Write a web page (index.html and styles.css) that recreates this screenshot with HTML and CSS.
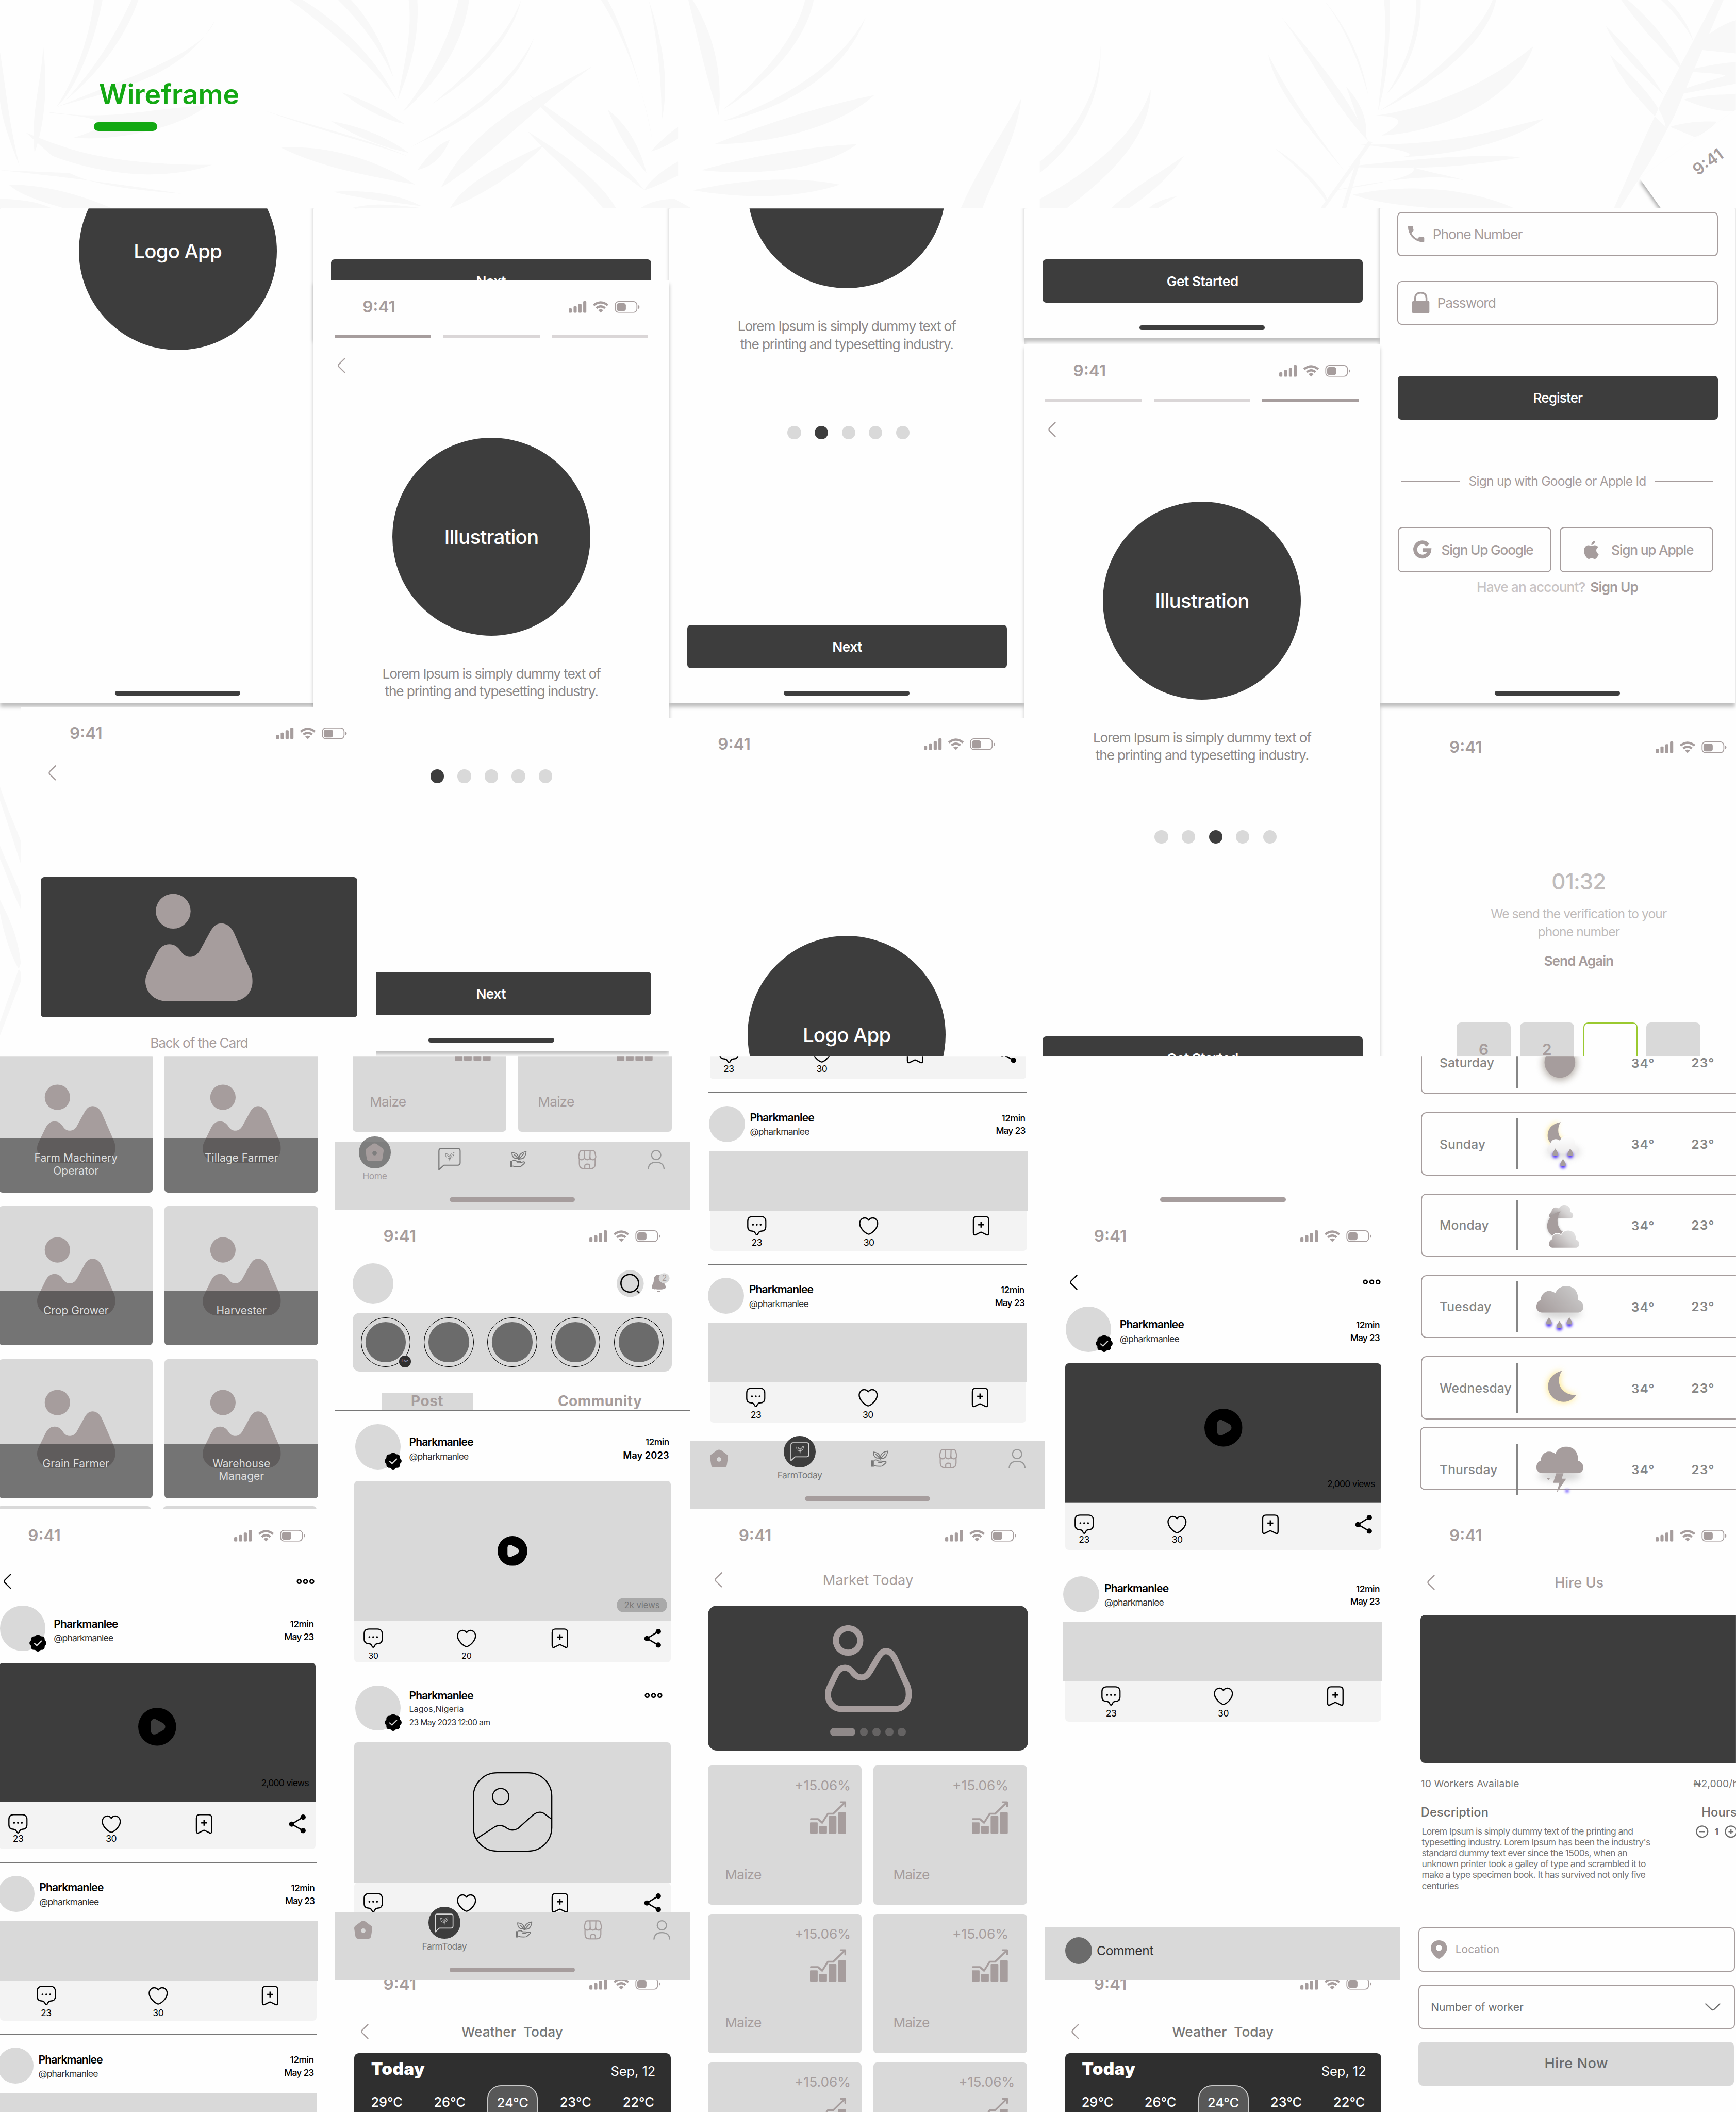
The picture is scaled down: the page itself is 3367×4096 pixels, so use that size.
FILE: index.html
```html
<!DOCTYPE html>
<html lang="en">
<head>
<meta charset="utf-8">
<title>Wireframe</title>
<link rel="stylesheet" href="styles.css">
</head>
<body>
<svg class="defs" aria-hidden="true">
  <defs>
    <filter id="soft" x="-100%" y="-100%" width="300%" height="300%"><feGaussianBlur stdDeviation="3"/></filter>
    <filter id="glow" x="-100%" y="-100%" width="300%" height="300%"><feGaussianBlur stdDeviation="8"/></filter>
    <linearGradient id="cloudA" x1="0" y1=".8" x2="1" y2=".2"><stop offset="0" stop-color="#a69d9d"/><stop offset="1" stop-color="#cccccc"/></linearGradient>
    <linearGradient id="cloudB" x1="0" y1=".8" x2="1" y2=".2"><stop offset="0" stop-color="#a69d9d"/><stop offset=".6" stop-color="#d5d3d3"/><stop offset="1" stop-color="#e6e6e6"/></linearGradient>
    <linearGradient id="cloudC" x1="0" y1="0" x2="0" y2="1"><stop offset="0" stop-color="#ffffff"/><stop offset="1" stop-color="#ecebeb"/></linearGradient>
  </defs>
  <symbol id="sys" viewBox="0 0 157 26">
    <g fill="currentColor"><rect x="0" y="16" width="7" height="10" rx="2"/><rect x="10.7" y="11" width="7" height="15" rx="2"/><rect x="21.4" y="6" width="7" height="20" rx="2"/><rect x="32" y="0" width="7" height="26" rx="2"/>
    <path d="M65 20Q70.700 16 76.400 20L70.700 25.800Z"/><rect x="106" y="4.500" width="20.500" height="17.500" rx="5"/><path d="M154 9Q157 10 157 13T154 17Z"/></g>
    <g fill="none" stroke="currentColor"><path stroke-width="5" d="M55 9.200Q70.700 -3.600 86.400 9.200M61 15.600Q70.700 7.600 80.400 15.600"/><rect x="103" y="1" width="48" height="24" rx="7.500" stroke-width="2"/></g>
  </symbol>
  <symbol id="back" viewBox="0 0 17 34"><path fill="none" stroke="currentColor" stroke-width="2.6" stroke-linecap="round" d="M15.500 1.500 2.800 14Q.500 17 2.800 20L15.500 32.500"/></symbol>
  <symbol id="picture" viewBox="0 0 237 238"><g fill="currentColor"><circle cx="61.500" cy="39" r="38.500"/><path d="M6 172 25 133C33 117 42 112 53 112C64 112 72 118 78 127C84 136 90 140 98.600 140C108 140 114 136 120 127L142 87C150 72 158 66 168 66C179 66 189 73 196 87L234 174C236 181 237 187 237 194C237 218 219 238 194 238H46C20 238 0 218 0 194C0 186 2 180 6 172Z"/></g></symbol>
  <symbol id="picture-line" viewBox="0 0 192 192"><g fill="none" stroke="currentColor" stroke-width="13.5"><circle cx="51.200" cy="33.600" r="27"/><path d="M10.500 137 26 105C31 97 37 94 44.300 94C52 94 58 99 63.700 107C69 113 74 115.500 81 115.500C88 115.500 94 111 99 103L118 70.600C123 62 128 57.300 134.800 57.300C143 57.300 149 63 154 72L183.500 137C185 142 185.500 147 185.500 152.800C185.500 171 173 185.200 155 185.200H36.300C19 185.200 6.500 171 6.500 152.800C6.500 147 8 142 10.500 137Z"/></g></symbol>
  <symbol id="comment" viewBox="0 0 43 44"><path fill="none" stroke="currentColor" stroke-width="2.700" d="M12 1.500H31C38 1.500 41.500 6 41.500 12V24C41.500 31 38 34 31 34C28 34 27 35 26 36.500L23.500 40.500C22.300 42.500 20.700 42.500 19.500 40.500L17 36.500C16 35 15 34 12 34C5 34 1.500 31 1.500 24V12C1.500 5 5 1.500 12 1.500Z"/><g fill="currentColor"><circle cx="13" cy="19.500" r="2.100"/><circle cx="21.500" cy="19.500" r="2.100"/><circle cx="30" cy="19.500" r="2.100"/></g></symbol>
  <symbol id="heart" viewBox="0 0 43 44"><path fill="none" stroke="currentColor" stroke-width="2.700" stroke-linejoin="round" d="M21.500 9.500C25 4 32 3 37 7C42.500 12 43 20 37.500 28C34 33 28 38 24 40Q21.500 41.300 19 40C15 38 9 33 5.500 28C0 20 .500 12 6 7C11 3 18 4 21.500 9.500Z"/></symbol>
  <symbol id="mark" viewBox="0 0 37 44"><path fill="none" stroke="currentColor" stroke-width="2.700" stroke-linejoin="round" d="M9 1.500H28C33 1.500 35.500 4 35.500 9V38C35.500 42 33.500 43.500 30 41.500L21 37Q18.500 35.500 16 37L7 41.500C3.500 43.500 1.500 42 1.500 38V9C1.500 4 4 1.500 9 1.500Z"/><path stroke="currentColor" stroke-width="3" d="M12 19.500H25M18.500 13V26"/></symbol>
  <symbol id="share" viewBox="0 0 37 44"><path fill="none" stroke="currentColor" stroke-width="3" d="M31 7 6 22.500 31 37"/><g fill="currentColor"><circle cx="5.800" cy="22.500" r="5.800"/><circle cx="31" cy="7" r="5.800"/><circle cx="31" cy="37" r="5.800"/></g></symbol>
  <symbol id="badge" viewBox="0 0 40 40"><rect x="5" y="5" width="30" height="30" rx="6"/><rect x="5" y="5" width="30" height="30" rx="6" transform="rotate(45 20 20)"/><path fill="none" stroke="#d9d9d9" stroke-width="2.600" stroke-linecap="round" stroke-linejoin="round" d="M12.500 21 17.500 25.500 27.500 15.500"/></symbol>
  <symbol id="more" viewBox="0 0 40 12"><g fill="none" stroke="currentColor" stroke-width="3"><circle cx="6" cy="6" r="4"/><circle cx="20" cy="6" r="4"/><circle cx="34" cy="6" r="4"/></g></symbol>
  <symbol id="play" viewBox="0 0 84 84"><path fill-rule="evenodd" d="M42 0A42 42 0 1 1 42 84A42 42 0 1 1 42 0ZM28 34C28 26 34 22.500 41 26.500L55 34C61.500 38 61.500 46 55 50L41 57.500C34 61.500 28 58 28 50Z"/></symbol>
  <symbol id="home" viewBox="0 0 40 40"><path fill="currentColor" fill-rule="evenodd" d="M15.500 1.800C18 0 22 0 24.500 1.800L37.500 11.500C39.500 13 40.300 15.500 39.800 18.500L37.300 34.500C36.800 38 34.500 40 31 40H9C5.500 40 3.200 38 2.700 34.500L.200 18.500C-.300 15.500 .500 13 2.500 11.500ZM20 17A5 5 0 1 0 20 27A5 5 0 1 0 20 17Z"/></symbol>
  <symbol id="leaves" viewBox="0 0 34 36"><g fill="none" stroke="currentColor" stroke-width="1.800" stroke-linejoin="round"><path d="M1 4C8 5 15 8 16.500 15C17 17 16.800 19 16 21C12 22 7 21 4 17C1.500 13 2 8 1 4ZM33 1C31 12 28 20 18 21C17 17 17.500 12 20 8.500C23 4 28 2.500 33 1ZM7 9C12 14 16 20 17 33M27 7C22 13 18 21 17 29"/></g></symbol>
  <symbol id="chat" viewBox="0 0 50 50"><path fill="none" stroke="currentColor" stroke-width="2.500" stroke-linejoin="round" d="M1.500 48.500V7Q1.500 1.500 7 1.500H43Q48.500 1.500 48.500 7V33Q48.500 38.500 43 38.500H12.500Z"/><use href="#leaves" x="15" y="10" width="21" height="22"/></symbol>
  <symbol id="farm" viewBox="0 0 37 37"><g fill="none" stroke="currentColor" stroke-width="2" stroke-linejoin="round"><path d="M4.500 3.500C13 4.500 18.500 7 19 16.500C11 18.500 4.500 15 4.500 3.500ZM36 1.500C34.500 13 30 19 20.500 17.500C19 9 25 3 36 1.500ZM9 8C13 11 17 15 19.500 20M31 6C27 10 23 14 19.500 20M6 22C10 20 13 21 16 23.500H22C25 23.500 24.500 26 22 26.500H15M24 25.500 31 24Q34.500 25 31 28.500L24 34.500Q14 36 6 33.500"/></g><rect x="0" y="22" width="5.500" height="14" fill="currentColor"/></symbol>
  <symbol id="store" viewBox="0 0 41 43"><g fill="none" stroke="currentColor" stroke-width="2.500" stroke-linejoin="round"><path d="M9 1.500H32Q36.500 1.500 37.500 6L39.500 15Q39 22 33 22T26.500 15.500Q26.500 22 20.500 22T14.500 15.500Q14 22 8 22T1.500 15L3.500 6Q4.500 1.500 9 1.500ZM14 2 14.500 16M27 2 26.500 16M3 20V31Q3 41.500 13 41.500H28Q38 41.500 38 31V20M15 41.500V36Q15 31.500 20.500 31.500T26 36V41.500"/></g></symbol>
  <symbol id="person" viewBox="0 0 38 43"><g fill="none" stroke="#999" stroke-width="2.600"><circle cx="19" cy="11.500" r="10.200"/><path d="M1.500 43C2 31.500 9 27.500 19 27.500S36 31.500 36.500 43"/></g></symbol>
  <symbol id="chart" viewBox="0 0 80 72"><g fill="currentColor"><rect x="0" y="47" width="17" height="25" rx="1.500"/><rect x="20.500" y="55" width="17" height="17" rx="1.500"/><rect x="41.500" y="33" width="17" height="39" rx="1.500"/><rect x="62.500" y="25" width="17" height="47" rx="1.500"/></g><path fill="none" stroke="currentColor" stroke-width="4" stroke-linejoin="round" stroke-linecap="round" d="M2 40H18L27 48 39.500 28H51.500L77 3M68 2.500H78V12"/></symbol>
  <symbol id="cloud" viewBox="0 0 104 59"><path d="M14 59C5 59 0 53 0 46C0 39 4 33 9.500 31C10 20 18 11 28 11C34 11 38 13 42 16C46 6 55 0 66 0C82 0 92 12 92 26V31C99 33 104 39 104 46C104 53 99 59 91 59Z"/></symbol>
  <symbol id="drop" viewBox="-10 -10 32 40"><circle cx="6" cy="15" r="6.500" fill="#4a2bff" filter="url(#soft)"/><path fill="#a69d9d" d="M6 0C9 6 12 8 12 12Q12 16 11 16H1Q0 16 0 12C0 8 3 6 6 0Z"/></symbol>
  <symbol id="call" viewBox="3 3 18 18"><path fill="currentColor" d="M6.620 10.790c1.440 2.830 3.760 5.140 6.590 6.590l2.200-2.200c.270-.270.670-.360 1.020-.240 1.120.370 2.330.570 3.570.570.550 0 1 .450 1 1V20c0 .550-.450 1-1 1-9.390 0-17-7.610-17-17 0-.550.450-1 1-1h3.500c.550 0 1 .450 1 1 0 1.250.200 2.450.570 3.570.110.350.030.740-.250 1.020l-2.200 2.200z"/></symbol>
</svg>

<main class="sheet">
  <header class="cover">
    <svg class="leafs" viewBox="0 0 3840 461" aria-hidden="true">
      <g transform="scale(.9566 .6378)" fill="#f8f8f8">
        <path d="M218 0C208 110 180 260 130 372C165 330 215 180 237 0ZM304 0C270 110 225 230 150 350C200 290 280 170 320 0ZM497 70C470 180 330 250 130 372C240 320 420 280 497 70ZM115 388C250 420 330 380 480 365C420 440 280 490 170 478C250 440 270 410 115 392ZM60 460C160 520 240 570 490 572C400 620 260 620 120 540ZM0 590C60 600 200 620 420 672C330 660 230 650 160 600ZM20 640C120 640 210 690 260 723H150C100 700 50 680 20 640ZM0 180C15 320 20 420 45 575C25 500 5 420 0 350ZM100 160C110 300 105 420 80 530C70 400 95 290 100 160ZM0 690C40 690 90 700 120 723H0Z"/>
        <path d="M670 0C780 120 880 260 918 350C880 220 790 80 700 0ZM782 0C850 100 890 200 910 270C890 160 850 60 812 0ZM945 0C955 120 930 250 920 345C950 240 970 120 965 0ZM1060 0C1040 130 990 280 930 390C1010 290 1070 160 1085 0ZM1205 0C1190 100 1130 240 1000 360C1080 260 1170 140 1205 0ZM1235 130C1190 280 1080 400 950 510C1060 430 1190 330 1235 130ZM1370 230C1250 330 1100 420 1020 650C1120 560 1200 420 1370 230ZM1260 500C1180 560 1080 620 1040 723C1140 660 1210 580 1260 500ZM615 385C730 450 850 490 948 545C850 480 730 440 615 385ZM650 512C760 500 880 560 960 640C850 610 740 580 650 512ZM790 320C850 350 900 390 935 430C900 420 840 380 790 320ZM765 420C840 440 900 480 945 530C880 510 820 470 765 420ZM770 665C860 655 930 680 975 715C900 700 840 690 770 665ZM810 723C860 700 920 710 980 723ZM1040 485C1020 560 990 580 965 590C990 540 1010 500 1040 485Z"/>
        <path d="M1390 0C1440 120 1490 300 1510 500C1495 360 1450 120 1405 0ZM1500 0C1530 130 1550 280 1530 420C1530 280 1520 130 1500 0ZM1225 330C1340 450 1430 540 1490 660C1400 560 1300 460 1225 330ZM1220 455C1310 540 1390 630 1425 723H1395C1340 620 1270 540 1220 455ZM1405 380C1450 430 1480 510 1495 600C1460 540 1430 470 1405 380ZM1568 440C1540 470 1520 500 1505 525C1520 520 1550 500 1568 480ZM1568 560C1530 590 1500 630 1490 660C1530 640 1550 620 1568 610ZM1560 690C1530 690 1500 700 1480 723H1600Z"/>
      </g>
      <g transform="translate(1360 0) scale(.9566 .6378)" fill="#f8f8f8">
        <path d="M180 0C230 120 250 260 240 400C210 260 190 120 170 0ZM440 0C420 130 340 270 250 380C350 290 440 150 460 0ZM580 60C530 200 420 330 250 420C370 390 530 270 580 60ZM600 330C500 360 360 420 230 500C360 500 520 440 600 330ZM560 500C440 510 320 540 200 590C330 610 480 590 560 500ZM520 640C420 610 300 620 180 660C300 690 420 690 520 640ZM850 723C880 600 930 480 940 340C900 460 840 580 800 723Z"/>
      </g>
      <g transform="translate(2300 0) scale(.982 .6378)" fill="#f8f8f8">
        <path d="M134 120C150 280 80 470 0 560V600C100 480 150 300 134 120ZM250 310C220 460 120 590 0 690V723H60C150 620 250 480 250 310ZM325 540C270 600 210 650 160 723H200C260 660 300 600 325 540ZM310 680C280 690 260 700 245 723H265Z"/>
        <path d="M545 60C610 200 670 380 740 490C700 340 620 200 545 60ZM640 0C690 100 720 220 740 330C725 200 690 90 640 0ZM775 0C785 120 770 250 762 385C785 270 790 120 788 0ZM848 0C850 120 820 240 780 330C830 250 860 120 858 0ZM1020 0C990 120 880 270 765 385C900 280 1010 140 1028 0ZM1112 160C1050 240 920 370 750 402C860 400 780 460 770 470C900 460 1070 350 1112 160ZM1135 412C1050 440 930 510 716 500C850 520 870 550 770 545C900 550 1060 500 1135 412ZM1085 545C960 530 800 560 690 578C840 590 960 580 1085 545ZM840 580C880 600 930 610 962 628C900 600 790 620 656 662C760 640 860 610 840 580ZM515 190C560 330 640 500 690 600C620 470 530 320 515 190ZM530 515C580 580 620 640 645 700C660 690 600 580 530 515ZM690 300C710 380 720 440 735 480C740 410 720 350 690 300ZM705 675C840 630 980 660 1070 723H900C820 715 750 700 705 675ZM740 490 632 723H642L750 492ZM716 545 680 723H690L722 560Z"/>
        <path d="M1310 0C1360 110 1420 200 1450 250C1430 160 1370 60 1325 0ZM1400 0C1440 60 1470 120 1475 160C1465 90 1440 40 1415 0ZM1275 90C1340 190 1380 260 1405 330C1360 260 1300 180 1275 90ZM1285 190C1340 270 1400 360 1410 440C1370 380 1310 290 1285 190ZM1568 70C1540 80 1500 120 1470 170L1568 185ZM1568 215C1520 220 1470 240 1440 248C1500 250 1560 260 1540 265C1490 290 1440 310 1410 335C1470 320 1530 300 1568 290ZM1450 345C1500 325 1540 330 1568 325V385C1530 390 1490 370 1450 345ZM1420 440C1460 420 1500 420 1525 422C1510 450 1490 470 1475 475ZM1520 0 1405 340 1365 470 1293 723H1307L1375 560 1430 400 1540 0Z"/>
      </g>
    </svg>
    <h1 class="title">Wireframe</h1>
    <div class="rule"></div>
    <article class="phone tilted"><div class="status"><b>9:41</b></div></article>
  </header>

  <section class="board upper">
    <svg class="side-leaf" viewBox="0 0 46 720" aria-hidden="true"><path fill="#f8f8f8" d="M0 170C20 230 36 260 46 290V340C30 290 10 230 0 200ZM0 300C20 350 36 380 46 410V440C26 400 10 350 0 330ZM0 420C20 460 40 500 46 560V580C20 540 6 480 0 450ZM46 560 0 690V720L46 600Z"/></svg>

    <article class="phone splash p-splash1"><div class="disc">Logo App</div><i class="bar"></i></article>

    <article class="phone p-next"><div class="btn">Next</div><i class="bar"></i></article>

    <article class="phone p-step2">
      <div class="disc illus">Illustration</div>
      <p class="lead">Lorem Ipsum is simply dummy text of<br>the printing and typesetting industry.</p>
      <div class="dots"><i></i><i class="on"></i><i></i><i></i><i></i></div>
      <div class="btn">Next</div><i class="bar"></i>
    </article>

    <article class="phone p-start"><div class="btn">Get Started</div><i class="bar"></i></article>

    <article class="phone p-register">
      <div class="input"><svg class="i36"><use href="#call"/></svg>Phone Number</div>
      <div class="input pass"><svg class="lock" viewBox="0 0 38 48"><path fill="none" stroke="currentColor" stroke-width="4" d="M6.500 22V14C6.500 6 12 2 19 2S31.500 6 31.500 14V22"/><rect y="20" width="38" height="28" rx="3.500" fill="currentColor"/></svg>Password</div>
      <div class="btn register">Register</div>
      <div class="or"><span>Sign up with Google or Apple Id</span></div>
      <div class="socials">
        <div class="social google"><svg viewBox="0 0 40 40"><path fill="none" stroke="currentColor" stroke-width="8.500" d="M32.500 9.500A15.700 15.700 0 1 0 35.700 20.500H20.500"/></svg>Sign Up Google</div>
        <div class="social apple"><svg viewBox="2.200 0 19.600 24"><path fill="currentColor" d="M12.152 6.896c-.948 0-2.415-1.078-3.960-1.040-2.040.027-3.910 1.183-4.961 3.014-2.117 3.675-.546 9.103 1.519 12.090 1.013 1.454 2.208 3.090 3.792 3.039 1.520-.065 2.090-.987 3.935-.987 1.831 0 2.350.987 3.960.948 1.637-.026 2.676-1.480 3.676-2.948 1.156-1.688 1.636-3.325 1.662-3.415-.039-.013-3.182-1.221-3.220-4.857-.026-3.040 2.480-4.494 2.597-4.559-1.429-2.090-3.623-2.324-4.390-2.376-2-.156-3.675 1.090-4.610 1.090zM15.530 3.830c.843-1.012 1.400-2.427 1.245-3.830-1.207.052-2.662.805-3.532 1.818-.780.896-1.454 2.338-1.273 3.714 1.338.104 2.715-.688 3.559-1.701"/></svg>Sign up Apple</div>
      </div>
      <p class="have">Have an account? <b>Sign Up</b></p>
      <i class="bar"></i>
    </article>

    <article class="phone p-step1">
      <div class="status"><b>9:41</b><svg class="sys"><use href="#sys"/></svg></div>
      <div class="progress"><i class="on"></i><i></i><i></i></div>
      <svg class="back"><use href="#back"/></svg>
      <div class="disc illus">Illustration</div>
      <p class="lead">Lorem Ipsum is simply dummy text of<br>the printing and typesetting industry.</p>
      <div class="dots"><i class="on"></i><i></i><i></i><i></i><i></i></div>
      <div class="btn">Next</div><i class="bar"></i>
    </article>

    <article class="phone p-step3">
      <div class="status"><b>9:41</b><svg class="sys"><use href="#sys"/></svg></div>
      <div class="progress"><i></i><i></i><i class="on"></i></div>
      <svg class="back"><use href="#back"/></svg>
      <div class="disc illus">Illustration</div>
      <p class="lead">Lorem Ipsum is simply dummy text of<br>the printing and typesetting industry.</p>
      <div class="dots"><i></i><i></i><i class="on"></i><i></i><i></i></div>
      <div class="btn">Get Started</div><i class="bar"></i>
    </article>

    <article class="phone flat splash p-splash2">
      <div class="status"><b>9:41</b><svg class="sys"><use href="#sys"/></svg></div>
      <div class="disc">Logo App</div>
    </article>

    <article class="phone flat p-card">
      <div class="status"><b>9:41</b><svg class="sys"><use href="#sys"/></svg></div>
      <svg class="back"><use href="#back"/></svg>
      <div class="idcard"><svg><use href="#picture"/></svg></div>
      <p class="caption">Back of the Card</p>
    </article>

    <article class="phone flat p-otp">
      <div class="status"><b>9:41</b><svg class="sys"><use href="#sys"/></svg></div>
      <p class="timer">01:32</p>
      <p class="sent">We send the verification to your<br>phone number</p>
      <p class="again">Send Again</p>
      <div class="code"><span>6</span><span>2</span><span class="cur"></span><span></span></div>
    </article>
  </section>

  <section class="board lower">
    <article class="phone flat p-roles">
      <div class="roles">
        <div class="role"><svg><use href="#picture"/></svg><p>Farm Machinery<br>Operator</p></div>
        <div class="role"><svg><use href="#picture"/></svg><p>Tillage Farmer</p></div>
        <div class="role"><svg><use href="#picture"/></svg><p>Crop Grower</p></div>
        <div class="role"><svg><use href="#picture"/></svg><p>Harvester</p></div>
        <div class="role"><svg><use href="#picture"/></svg><p>Grain Farmer</p></div>
        <div class="role"><svg><use href="#picture"/></svg><p>Warehouse<br>Manager</p></div>
      </div>
      <div class="roles more"><div class="role"></div><div class="role"></div></div>
    </article>

    <article class="phone flat p-homes">
      <div class="stocks">
        <div class="stock"><span>+15.06%</span><svg><use href="#chart"/></svg><p>Maize</p></div>
        <div class="stock"><span>+15.06%</span><svg><use href="#chart"/></svg><p>Maize</p></div>
      </div>
      <nav class="tabs first">
        <div class="active"><span class="knob"><svg class="t-home"><use href="#home"/></svg></span>Home</div>
        <svg class="t-chat"><use href="#chat"/></svg><svg class="t-farm"><use href="#farm"/></svg><svg class="t-store"><use href="#store"/></svg><svg class="t-person"><use href="#person"/></svg>
        <i class="bar"></i>
      </nav>
    </article>

    <article class="phone flat p-thread-mid">
      <div class="status"><b>9:41</b><svg class="sys"><use href="#sys"/></svg></div>
      <div class="tools"><svg class="back"><use href="#back"/></svg><svg class="dots3"><use href="#more"/></svg></div>
      <div class="author"><span class="face"><svg><use href="#badge"/></svg></span><p><b>Pharkmanlee</b>@pharkmanlee</p><p class="when">12min<br><em>May 23</em></p></div>
      <div class="video"><svg class="play"><use href="#play"/></svg><span>2,000 views</span></div>
      <div class="acts a1"><div><svg><use href="#comment"/></svg>23</div><div><svg><use href="#heart"/></svg>30</div><div><svg><use href="#mark"/></svg></div><div><svg><use href="#share"/></svg></div></div>
      <div class="post">
        <div class="author"><span class="face"></span><p><b>Pharkmanlee</b>@pharkmanlee</p><p class="when">12min<br><em>May 23</em></p></div>
        <div class="block"></div>
        <div class="acts a2"><div><svg><use href="#comment"/></svg>23</div><div><svg><use href="#heart"/></svg>30</div><div><svg><use href="#mark"/></svg></div></div>
      </div>
      <div class="post next">
        <div class="author"><span class="face"></span><p><b>Pharkmanlee</b>@pharkmanlee</p><p class="when">12min<br><em>May 23</em></p></div>
        <div class="block"></div>
        <div class="acts a2"><div><svg><use href="#comment"/></svg>23</div><div><svg><use href="#heart"/></svg>30</div><div><svg><use href="#mark"/></svg></div></div>
      </div>
      <nav class="tabs second">
        <svg class="t-home"><use href="#home"/></svg>
        <div class="active"><span class="knob"><svg class="t-chat"><use href="#chat"/></svg></span>FarmToday</div>
        <svg class="t-farm"><use href="#farm"/></svg><svg class="t-store"><use href="#store"/></svg><svg class="t-person"><use href="#person"/></svg>
        <i class="bar"></i>
      </nav>
    </article>

    <article class="phone flat p-blank"><i class="bar"></i></article>

    <article class="phone flat p-week">
      <div class="week">
        <div class="day"><span>Saturday</span><i></i>
          <svg viewBox="0 0 140 140"><circle cx="70" cy="72" r="38" fill="#8d8378" opacity=".6" filter="url(#glow)"/><circle cx="70" cy="70" r="34" fill="#a69d9d"/></svg><b>34°</b><b>23°</b></div>
        <div class="day"><span>Sunday</span><i></i>
          <svg viewBox="0 0 140 140"><g transform="translate(43 22) scale(.78)"><path fill="#ffdf5a" opacity=".8" filter="url(#glow)" d="M31 0C12 5 0 18 0 35C0 54 15 69 34 69C46 69 57 63 62 54C42 55 24 42 24 22C24 13 27 5 31 0Z"/><path fill="#a69d9d" d="M37 0C12 5 0 18 0 40C0 54 15 69 34 69C46 69 57 63 62 54C42 55 30 42 30 24C30 13 33 5 37 0Z"/></g><ellipse cx="78" cy="88" rx="38" ry="14" fill="#999" opacity=".3" filter="url(#glow)"/><use href="#cloud" x="42" y="51" width="70" height="42" fill="url(#cloudC)"/><use href="#drop" x="44" y="70" width="32" height="40"/><use href="#drop" x="61" y="93" width="32" height="40"/><use href="#drop" x="77" y="70" width="32" height="40"/></svg><b>34°</b><b>23°</b></div>
        <div class="day"><span>Monday</span><i></i>
          <svg viewBox="0 0 140 140"><use href="#cloud" x="46" y="25" width="54" height="30" fill="url(#cloudB)"/><path transform="translate(42 39) scale(.95)" fill="#888" opacity=".5" filter="url(#soft)" d="M29 0C10 5 0 18 0 35C0 45 5 52 12 57L40 50C28 46 24 32 24 22C24 13 26 5 29 0Z"/><path transform="translate(42 39) scale(.95)" fill="#a69d9d" d="M31 0C12 5 0 18 0 35C0 45 5 52 12 57L42 50C28 46 24 32 24 22C24 13 27 5 31 0Z"/><use href="#cloud" x="46" y="78" width="67" height="41" fill="#fff"/><use href="#cloud" x="46" y="81" width="67" height="39" fill="url(#cloudB)"/></svg><b>34°</b><b>23°</b></div>
        <div class="day"><span>Tuesday</span><i></i>
          <svg viewBox="0 0 140 140"><ellipse cx="70" cy="84" rx="48" ry="12" fill="#888" opacity=".35" filter="url(#glow)"/><use href="#cloud" x="18" y="24" width="104" height="59" fill="url(#cloudA)"/><use href="#drop" x="30" y="83" width="32" height="40"/><use href="#drop" x="53" y="91" width="32" height="40"/><use href="#drop" x="75" y="83" width="32" height="40"/></svg><b>34°</b><b>23°</b></div>
        <div class="day"><span>Wednesday</span><i></i>
          <svg viewBox="0 0 140 140"><g transform="translate(44 31)"><path fill="#ffdf5a" opacity=".85" filter="url(#glow)" d="M31 0C12 5 0 18 0 35C0 54 15 69 34 69C46 69 57 63 62 54C42 55 24 42 24 22C24 13 27 5 31 0Z"/><path fill="#a69d9d" d="M31 0C12 5 0 18 0 35C0 54 15 69 34 69C46 69 57 63 62 54C42 55 24 42 24 22C24 13 27 5 31 0Z"/></g></svg><b>34°</b><b>23°</b></div>
        <div class="day last"><span>Thursday</span><i></i>
          <svg viewBox="0 0 140 140"><ellipse cx="70" cy="84" rx="48" ry="12" fill="#888" opacity=".35" filter="url(#glow)"/><g fill="#a69d9d"><use href="#cloud" x="18" y="20" width="104" height="59"/><path d="M62 79H78L74 91H84L63 122 69 100H55Z"/></g><circle cx="86" cy="118" r="3.500" fill="#4a2bff" filter="url(#soft)"/><path fill="#a69d9d" d="M83 115 86 113 89 115ZM41 90H48L44.500 94Z"/></svg><b>34°</b><b>23°</b></div>
      </div>
    </article>

    <article class="phone flat p-weather1">
      <div class="status"><b>9:41</b><svg class="sys"><use href="#sys"/></svg></div>
      <div class="head dim"><svg class="back"><use href="#back"/></svg><span>Weather&nbsp; Today</span></div>
      <div class="forecast"><div class="top"><b>Today</b><span>Sep, 12</span></div><div class="temps"><span>29°C</span><span>26°C</span><span class="now">24°C</span><span>23°C</span><span>22°C</span></div></div>
    </article>
    <article class="phone flat p-weather2">
      <div class="status"><b>9:41</b><svg class="sys"><use href="#sys"/></svg></div>
      <div class="head dim"><svg class="back"><use href="#back"/></svg><span>Weather&nbsp; Today</span></div>
      <div class="forecast"><div class="top"><b>Today</b><span>Sep, 12</span></div><div class="temps"><span>29°C</span><span>26°C</span><span class="now">24°C</span><span>23°C</span><span>22°C</span></div></div>
    </article>

    <article class="phone flat p-feed">
      <div class="status"><b>9:41</b><svg class="sys"><use href="#sys"/></svg></div>
      <div class="me"><span class="avatar"></span>
        <svg class="search" viewBox="0 0 60 60"><circle cx="30" cy="30" r="30" fill="#d9d9d9"/><g fill="none" stroke="#000" stroke-width="3"><circle cx="29" cy="29.500" r="19.500"/><path d="M45 46 50.500 51.500"/></g></svg>
        <svg class="bell" viewBox="0 0 40 42"><path fill="#a69d9d" d="M15.500 1C8 1 4.500 7 4.500 14C4.500 21 0 24 0 29C0 32.500 5 34 15.500 34S31 32.500 31 29C31 24 26.500 21 26.500 14C26.500 7 23 1 15.500 1ZM10 36.500H21Q15.500 43 10 36.500Z"/><ellipse cx="27.500" cy="9" rx="12" ry="11" fill="#d9d9d9"/><text x="28" y="15" class="count">2</text></svg>
      </div>
      <div class="stories"><i><em>Live</em></i><i></i><i></i><i></i><i></i></div>
      <div class="switch"><b class="on">Post</b><b>Community</b></div>
      <div class="author"><span class="face"><svg><use href="#badge"/></svg></span><p><b>Pharkmanlee</b>@pharkmanlee</p><p class="when">12min<br><strong>May 2023</strong></p></div>
      <div class="media"><svg class="play sm"><use href="#play"/></svg><span class="pill">2k views</span></div>
      <div class="acts a3"><div><svg><use href="#comment"/></svg>30</div><div><svg><use href="#heart"/></svg>20</div><div><svg><use href="#mark"/></svg></div><div><svg><use href="#share"/></svg></div></div>
      <div class="author second"><span class="face"><svg><use href="#badge"/></svg></span><p><b>Pharkmanlee</b><span class="place">Lagos,Nigeria</span><span class="date">23 May 2023 12:00 am</span></p><svg class="dots3"><use href="#more"/></svg></div>
      <div class="media"><svg class="frame" viewBox="0 0 176 176"><g fill="none" stroke="#000" stroke-width="2.600"><rect x="1.300" y="1.300" width="173.400" height="173.400" rx="52"/><circle cx="61.700" cy="54" r="18"/><path d="M7 148 48.500 121Q60 114 73 122L77 125Q87 131 99.500 125L132.600 95Q148 83 160 93L174.500 104"/></g></svg></div>
      <div class="acts a4"><div><svg><use href="#comment"/></svg></div><div><svg><use href="#heart"/></svg></div><div><svg><use href="#mark"/></svg></div><div><svg><use href="#share"/></svg></div></div>
      <nav class="tabs second">
        <svg class="t-home"><use href="#home"/></svg>
        <div class="active"><span class="knob"><svg class="t-chat"><use href="#chat"/></svg></span>FarmToday</div>
        <svg class="t-farm"><use href="#farm"/></svg><svg class="t-store"><use href="#store"/></svg><svg class="t-person"><use href="#person"/></svg>
        <i class="bar"></i>
      </nav>
    </article>

    <article class="phone flat p-thread-right">
      <div class="status"><b>9:41</b><svg class="sys"><use href="#sys"/></svg></div>
      <div class="tools"><svg class="back"><use href="#back"/></svg><svg class="dots3"><use href="#more"/></svg></div>
      <div class="author"><span class="face"><svg><use href="#badge"/></svg></span><p><b>Pharkmanlee</b>@pharkmanlee</p><p class="when">12min<br><em>May 23</em></p></div>
      <div class="video"><svg class="play"><use href="#play"/></svg><span>2,000 views</span></div>
      <div class="acts a1"><div><svg><use href="#comment"/></svg>23</div><div><svg><use href="#heart"/></svg>30</div><div><svg><use href="#mark"/></svg></div><div><svg><use href="#share"/></svg></div></div>
      <div class="post next">
        <div class="author"><span class="face"></span><p><b>Pharkmanlee</b>@pharkmanlee</p><p class="when">12min<br><em>May 23</em></p></div>
        <div class="block"></div>
        <div class="acts a2"><div><svg><use href="#comment"/></svg>23</div><div><svg><use href="#heart"/></svg>30</div><div><svg><use href="#mark"/></svg></div></div>
      </div>
      <div class="reply"><i></i>Comment</div>
    </article>

    <article class="phone flat p-thread-left">
      <div class="status"><b>9:41</b><svg class="sys"><use href="#sys"/></svg></div>
      <div class="tools"><svg class="back"><use href="#back"/></svg><svg class="dots3"><use href="#more"/></svg></div>
      <div class="author"><span class="face"><svg><use href="#badge"/></svg></span><p><b>Pharkmanlee</b>@pharkmanlee</p><p class="when">12min<br><em>May 23</em></p></div>
      <div class="video"><svg class="play"><use href="#play"/></svg><span>2,000 views</span></div>
      <div class="acts a1"><div><svg><use href="#comment"/></svg>23</div><div><svg><use href="#heart"/></svg>30</div><div><svg><use href="#mark"/></svg></div><div><svg><use href="#share"/></svg></div></div>
      <div class="post">
        <div class="author"><span class="face"></span><p><b>Pharkmanlee</b>@pharkmanlee</p><p class="when">12min<br><em>May 23</em></p></div>
        <div class="block"></div>
        <div class="acts a2"><div><svg><use href="#comment"/></svg>23</div><div><svg><use href="#heart"/></svg>30</div><div><svg><use href="#mark"/></svg></div></div>
      </div>
      <div class="post next">
        <div class="author"><span class="face"></span><p><b>Pharkmanlee</b>@pharkmanlee</p><p class="when">12min<br><em>May 23</em></p></div>
        <div class="block"></div>
      </div>
    </article>

    <article class="phone flat p-market">
      <div class="status"><b>9:41</b><svg class="sys"><use href="#sys"/></svg></div>
      <div class="head"><svg class="back"><use href="#back"/></svg><span>Market Today</span></div>
      <div class="hero"><svg><use href="#picture-line"/></svg><div class="pager"><i class="on"></i><i></i><i></i><i></i><i></i></div></div>
      <div class="stocks">
        <div class="stock"><span>+15.06%</span><svg><use href="#chart"/></svg><p>Maize</p></div>
        <div class="stock"><span>+15.06%</span><svg><use href="#chart"/></svg><p>Maize</p></div>
        <div class="stock"><span>+15.06%</span><svg><use href="#chart"/></svg><p>Maize</p></div>
        <div class="stock"><span>+15.06%</span><svg><use href="#chart"/></svg><p>Maize</p></div>
        <div class="stock"><span>+15.06%</span><svg><use href="#chart"/></svg></div>
        <div class="stock wide"><span>+15.06%</span><svg><use href="#chart"/></svg></div>
      </div>
    </article>

    <article class="phone flat p-hire">
      <div class="status"><b>9:41</b><svg class="sys"><use href="#sys"/></svg></div>
      <div class="head"><svg class="back"><use href="#back"/></svg><span>Hire Us</span></div>
      <div class="cover-photo"></div>
      <div class="facts"><span>10 Workers Available</span><span>₦2,000/h</span></div>
      <div class="facts strong"><span>Description</span><span>Hours</span></div>
      <div class="detail">
        <p>Lorem Ipsum is simply dummy text of the printing and<br>typesetting industry. Lorem Ipsum has been the industry's<br>standard dummy text ever since the 1500s, when an<br>unknown printer took a galley of type and scrambled it to<br>make a type specimen book. It has survived not only five<br>centuries</p>
        <div class="stepper"><svg viewBox="0 0 28 28"><circle cx="14" cy="14" r="12.500"/><path d="M8 14H20"/></svg><b>1</b><svg viewBox="0 0 28 28"><circle cx="14" cy="14" r="12.500"/><path d="M8.500 14H19.500M14 8.500V19.500"/></svg></div>
      </div>
      <div class="input loc"><svg viewBox="0 0 36 41"><path fill="currentColor" fill-rule="evenodd" d="M18 41C14 41 0 28 0 18C0 7 8 0 18 0S36 7 36 18C36 28 22 41 18 41ZM18 10.500A6.500 6.500 0 1 0 18 23.500A6.500 6.500 0 1 0 18 10.500Z"/></svg>Location</div>
      <div class="input num">Number of worker<svg viewBox="0 0 34 17"><path fill="none" stroke="currentColor" stroke-width="2.600" stroke-linecap="round" d="M1.500 1.500 14 13.500Q17 16.500 20 13.500L32.500 1.500"/></svg></div>
      <div class="hire-btn">Hire Now</div>
    </article>
  </section>
</main>
</body>
</html>
```
FILE: styles.css
```css
:root {
  --paper: #fefefe;
  --ink: #3d3d3d;
  --mauve: #a69d9d;
  --grey: #d9d9d9;
  --text: #868686;
}

* { box-sizing: border-box; margin: 0; padding: 0; }
html { background: var(--paper); overflow: hidden; }
body { zoom: .8768; font-family: Inter, "Liberation Sans", sans-serif; color: #000; }
svg { display: block; flex: none; overflow: visible; }
.defs { position: absolute; width: 0; height: 0; }
i, em { font-style: normal; }

.sheet { position: relative; width: 3840px; height: 4671px; overflow: hidden; background: var(--paper); }

/* cover strip */
.cover { position: relative; height: 461px; overflow: hidden; padding: 172px 0 0 219px; }
.leafs { position: absolute; left: 0; top: 0; width: 3840px; height: 461px; }
.title { position: relative; font-size: 61px; line-height: 74px; font-weight: 600; color: #13a813; }
.rule { position: relative; width: 140px; height: 20px; margin: 24px 0 0 -11px; border-radius: 10px; background: #13a813; }

/* canvas of artboards */
.board { position: absolute; left: 0; top: 0; width: 3840px; height: 4672px; overflow: hidden; }
.upper { clip-path: inset(461px 0 2336px 0); background: var(--paper); }
.lower { clip-path: inset(2336px 0 0 0); background: var(--paper); }
.side-leaf { position: absolute; left: 0; top: 1570px; width: 46px; height: 720px; overflow: hidden; }

.phone { position: absolute; width: 786px; height: 1704px; display: flex; flex-direction: column; overflow: hidden; background: var(--paper); box-shadow: 0 8px 8px rgba(0, 0, 0, .25); }
.phone.flat { box-shadow: none; }

.tilted { left: 3627px; top: 395px; transform-origin: 0 0; transform: rotate(-35.5deg); box-shadow: -4px 8px 8px rgba(0, 0, 0, .35); }
.p-splash1 { left: 0; top: -148px; }
.p-next { left: 694px; top: -956px; }
.p-step2 { left: 1480px; top: -148px; }
.p-start { left: 2266px; top: -956px; }
.p-register { left: 3052px; top: -148px; }
.p-step1 { left: 694px; top: 620px; }
.p-step3 { left: 2266px; top: 762px; }
.p-splash2 { left: 1480px; top: 1588px; }
.p-card { left: 46px; top: 1564px; }
.p-otp { left: 3098px; top: 1594px; }
.p-roles { left: -46px; top: 1634px; }
.p-homes { left: 740px; top: 972px; }
.p-thread-mid { left: 1526px; top: 1635px; height: 1703px; }
.p-blank { left: 2312px; top: 972px; }
.p-week { left: 3098px; top: 1634px; }
.p-weather1 { left: 740px; top: 4330px; height: 342px; }
.p-weather2 { left: 2312px; top: 4330px; height: 342px; }
.p-feed { left: 740px; top: 2676px; }
.p-thread-right { left: 2312px; top: 2676px; }
.p-thread-left { left: -46px; top: 3338px; height: 1334px; }
.p-market { left: 1526px; top: 3338px; height: 1334px; }
.p-hire { left: 3098px; top: 3338px; height: 1334px; }

/* shared parts */
.status { height: 117px; flex: none; display: flex; align-items: center; justify-content: space-between; padding: 0 65px 0 108px; color: var(--mauve); }
.status b { font-size: 36px; font-weight: 600; line-height: 44px; }
.sys { width: 157px; height: 26px; }
.back { width: 17px; height: 34px; color: var(--mauve); }
.bar { flex: none; width: 278px; height: 10px; border-radius: 5px; background: var(--ink); margin: auto auto 18px; }
.btn { flex: none; width: 708px; height: 96px; margin: auto 0 0 40px; border-radius: 8px; background: var(--ink); color: #fff; font-size: 30px; font-weight: 600; letter-spacing: -.6px; line-height: 97px; text-align: center; }
.btn + .bar { margin-top: 50px; }
.p-next .btn, .p-step1 .btn { margin-left: 38px; }
.disc { flex: none; width: 438px; height: 438px; margin: 0 auto; border-radius: 50%; background: var(--ink); color: #fff; font-size: 44px; font-weight: 500; letter-spacing: -1px; line-height: 438px; text-align: center; }
.splash .disc { margin-top: 484px; }
.splash .status + .disc { margin-top: 365px; }

/* onboarding */
.progress { display: flex; gap: 26px; padding: 0 46px; margin-top: 3px; }
.progress i { flex: 1; height: 8px; background: #dad6d7; }
.progress .on { background: var(--mauve); }
.progress + .back { margin: 43px 0 0 53px; }
.illus { margin-top: 143px; }
.p-step2 .illus { margin-top: 348px; }
.lead { margin-top: 65px; font-size: 30px; line-height: 39px; letter-spacing: -1.32px; text-align: center; color: #8c8888; }
.dots { display: flex; gap: 30px; margin: 153px 0 0 258px; }
.dots i { width: 30px; height: 30px; border-radius: 50%; background: var(--grey); }
.dots .on { background: var(--ink); }
.p-step2 .dots { margin: 161px 0 0 262px; }
.p-step3 .dots { margin: 145px 0 0 288px; }

/* registration */
.input { flex: none; display: flex; align-items: center; border: 2.4px solid var(--mauve); border-radius: 10px; color: var(--mauve); }
.p-register .input { width: 709px; height: 98px; margin: 617px 0 0 39px; padding-left: 22px; gap: 18px; font-size: 30px; letter-spacing: -1.2px; }
.p-register .pass { margin-top: 55px; height: 96px; padding-left: 31px; gap: 17px; }
.i36 { width: 36px; height: 36px; }
.lock { width: 38px; height: 48px; }
.register { margin: 114px 0 0 40px; font-weight: 500; letter-spacing: -1.1px; }
.or { display: flex; align-items: center; gap: 20px; margin: 117px 48px 0; padding-bottom: 2px; font-size: 28px; line-height: 40px; letter-spacing: -.83px; color: var(--mauve); }
.or::before, .or::after { content: ""; flex: 1; height: 1.6px; background: var(--mauve); }
.socials { display: flex; gap: 18px; margin: 79px 0 0 40px; }
.social { width: 340px; height: 100px; display: flex; align-items: center; border: 2.4px solid var(--mauve); border-radius: 10px; color: var(--mauve); font-size: 30px; font-weight: 500; letter-spacing: -1.4px; }
.google { gap: 22px; padding-left: 32px; }
.google svg { width: 40px; height: 40px; }
.apple { gap: 28px; padding-left: 51px; }
.apple svg { width: 33px; height: 40px; }
.have { margin-top: 13px; font-size: 30px; line-height: 40px; font-weight: 500; letter-spacing: -1px; text-align: center; color: #c9c4c4; }
.have b { font-weight: 600; color: var(--mauve); margin-left: 4px; }

/* id card and verification */
.p-card .back { margin: 11px 0 0 61px; }
.idcard { width: 700px; height: 310px; margin: 214px 0 0 44px; padding: 36px 0 0 232px; border-radius: 8px; background: var(--ink); color: var(--mauve); }
.idcard svg { width: 237px; height: 238px; }
.caption { margin-top: 37px; padding-left: 2px; font-size: 30px; line-height: 40px; letter-spacing: -1.35px; text-align: center; color: var(--mauve); }
.p-otp p { text-align: center; padding-left: 2px; color: #c0bcbc; }
.timer { margin-top: 210px; font-size: 48px; line-height: 60px; font-weight: 500; letter-spacing: -1.1px; }
.sent { margin-top: 21px; font-size: 28px; line-height: 39px; letter-spacing: -1px; }
.p-otp .again { margin-top: 25px; font-size: 30px; line-height: 40px; font-weight: 600; letter-spacing: -1.2px; color: var(--mauve); }
.code { display: flex; gap: 20px; margin: 117px 0 0 124px; }
.code span { width: 120px; height: 120px; border-radius: 10px; background: var(--grey); color: var(--mauve); font-size: 34px; font-weight: 600; line-height: 120px; text-align: center; }
.code .cur { background: none; border: 2.4px solid #9ac92f; }

/* role picker */
.roles { flex: none; display: grid; grid-template-columns: 340px 340px; gap: 30px 26px; margin: 696px 0 0 44px; }
.roles.more { margin: 18px 0 0 40px; }
.role { position: relative; height: 308px; padding: 68px 0 0 84px; border-radius: 8px; overflow: hidden; background: var(--grey); color: var(--mauve); }
.role svg { width: 173px; height: 174px; }
.role p { position: absolute; left: 0; right: 0; bottom: 0; height: 120px; padding-top: 30px; background: rgba(49, 49, 49, .6); color: #dcdcdc; font-size: 24px; line-height: 28px; text-align: center; }

/* commodity cards */
.stocks { flex: none; display: grid; grid-template-columns: 340px 340px; gap: 20px 26px; margin: 34px 0 0 40px; }
.p-homes .stocks { margin-top: 1224px; }
.stock { display: flex; flex-direction: column; height: 308px; padding: 26px 24px 0 38px; border-radius: 8px; background: var(--grey); color: var(--mauve); font-size: 30px; line-height: 36px; }
.stock span { align-self: flex-end; }
.stock svg { width: 80px; height: 72px; margin: 16px 0 0 188px; }
.stock p { margin-top: 73px; letter-spacing: -1px; }
.stock:nth-child(even) { padding: 26px 41px 0 44px; }
.stock:nth-child(even) svg { margin-left: 174px; }
.stock.wide span { margin-right: -14px; }

/* tab bar */
.tabs { position: absolute; left: 0; bottom: 0; width: 786px; height: 150px; background: var(--grey); color: var(--mauve); display: flex; align-items: flex-start; }
.tabs .active { display: flex; flex-direction: column; align-items: center; margin-top: -12px; font-size: 20px; line-height: 24px; letter-spacing: -.6px; }
.knob { width: 70px; height: 70px; margin-bottom: 5px; border-radius: 50%; display: flex; align-items: center; justify-content: center; background: var(--ink); }
.tabs .bar { position: absolute; left: 254px; bottom: 18px; margin: 0; background: var(--mauve); }
.t-home { width: 40px; height: 40px; margin-top: 18px; }
.t-chat { width: 50px; height: 50px; margin-top: 13px; color: #777; }
.t-farm { width: 37px; height: 37px; margin-top: 20px; color: #777; }
.t-store { width: 41px; height: 43px; margin-top: 17px; }
.t-person { width: 38px; height: 43px; margin-top: 17px; }
.knob svg { margin: 0; }
.knob .t-chat { width: 42px; height: 42px; color: var(--grey); }
.first .active { width: 70px; margin-left: 54px; }
.first .knob { background: rgba(100, 100, 100, .78); }
.first .t-chat { margin-left: 105px; }
.t-farm { margin-left: 109px; }
.t-store { margin-left: 113px; }
.t-person { margin-left: 113px; }
.second > .t-home { margin-left: 44px; }
.second .active { width: 98px; margin-left: 110px; color: #777; }

/* feed */
.me { display: flex; align-items: center; margin: 1px 0 0 40px; }
.avatar { width: 90px; height: 90px; border-radius: 50%; background: var(--grey); }
.search { width: 60px; height: 60px; margin-left: 494px; }
.bell { width: 40px; height: 42px; margin-left: 18px; }
.count { font-size: 18px; fill: #a69d9d; text-anchor: middle; }
.stories { flex: none; display: flex; align-items: center; gap: 30px; width: 706px; height: 130px; margin: 20px 0 0 40px; padding-left: 18px; border-radius: 16px; background: var(--grey); }
.stories i { position: relative; width: 110px; height: 110px; border: 2px solid #000; border-radius: 50%; background: #6b6b6b; box-shadow: inset 0 0 0 9px var(--grey); }
.stories em { position: absolute; right: -2px; bottom: -2px; width: 26px; height: 26px; border-radius: 50%; background: #2e2e2e; color: #ddd; font-size: 8px; line-height: 26px; text-align: center; }
.switch { flex: none; display: flex; height: 40px; margin-top: 46px; padding-left: 104px; border-bottom: 1.4px solid #777; color: var(--mauve); font-size: 32px; line-height: 38px; }
.switch b { height: 38px; letter-spacing: .5px; }
.switch .on { width: 202px; margin-right: 188px; background: var(--grey); text-align: center; }
.author { flex: none; display: flex; align-items: center; height: 100px; margin: 37px 46px 0; color: #333; font-size: 20px; line-height: 31px; letter-spacing: -.9px; }
.face { position: relative; width: 100px; height: 100px; border-radius: 50%; background: var(--grey); margin-right: 19px; }
.face svg { position: absolute; left: 64px; top: 62px; width: 40px; height: 40px; }
.author p { padding-top: 11px; }
.author p b { display: block; color: #000; font-size: 24px; font-weight: 600; letter-spacing: -.95px; }
.author .when { margin-left: auto; padding-top: 11px; text-align: right; line-height: 28px; color: #000; font-weight: 450; letter-spacing: -.6px; }
.when em { letter-spacing: -.95px; }
.when strong { font-weight: 600; font-size: 21px; letter-spacing: 0; }
.switch + .author { margin-top: 30px; }
.media { position: relative; flex: none; width: 700px; height: 310px; margin: 26px 0 0 44px; border-radius: 8px 8px 0 0; background: var(--grey); display: flex; align-items: center; justify-content: center; }
.play { width: 84px; height: 84px; }
.play.sm { width: 66px; height: 66px; }
.pill { position: absolute; right: 8px; bottom: 19px; width: 112px; height: 32px; border-radius: 16px; background: #a9a9a9; color: #777; font-size: 19px; line-height: 32px; text-align: center; }
.frame { width: 176px; height: 176px; margin-bottom: 1px; }
.acts { flex: none; display: flex; justify-content: space-between; margin-left: 44px; width: 700px; background: #f3f3f3; border-radius: 0 0 8px 8px; font-size: 20px; line-height: 20px; letter-spacing: -.5px; }
.acts div { width: 44px; display: flex; flex-direction: column; align-items: center; gap: 1px; }
.acts svg { width: 43px; height: 44px; }
.a1 { height: 104px; padding: 26px 18px 0 20px; }
.a2 { height: 89px; padding: 11px 80px 0; margin-left: 46px; }
.a2 div { gap: 6px; }
.a3 { height: 91px; padding: 16px 18px 0 20px; font-size: 18px; letter-spacing: 0; }
.a3 div { gap: 7px; }
.a4 { height: 116px; padding: 23px 18px 0 20px; border-radius: 8px 8px 0 0; }
.second.author { margin-top: 51px; line-height: 30px; }
.second.author p { padding-top: 6px; }
.second .place, .second .date { display: block; font-size: 18px; letter-spacing: .25px; }
.second .date { letter-spacing: -.8px; }
.dots3 { width: 40px; height: 12px; color: #000; }
.second .dots3 { align-self: flex-start; margin: 17px 14px 0 auto; }

/* thread */
.tools { display: flex; align-items: center; justify-content: space-between; margin: 26px 44px 0 54px; }
.tools .back { color: #000; }
.video { position: relative; flex: none; width: 700px; height: 308px; margin: 26px 0 0 44px; border-radius: 8px 8px 0 0; background: var(--ink); border-bottom: 1.4px solid #777; display: flex; padding: 100px 0 0 308px; }
.video span { position: absolute; right: 15px; bottom: 29px; font-size: 20px; line-height: 24px; letter-spacing: -.9px; }
.post { flex: none; margin-top: 29px; }
.post::before { content: ""; display: block; width: 706px; height: 1.4px; margin: 0 0 -.4px 40px; background: #777; }
.post .author { height: 80px; margin: 29px 44px 0 42px; }
.post .face { width: 80px; height: 80px; margin-right: 11px; }
.post .author p { padding-top: 4px; }
.block { width: 706px; height: 132px; margin: 20px 0 0 42px; background: var(--grey); }
.next .author { margin-left: 40px; margin-right: 46px; }
.next .block { margin-left: 40px; }
.next .a2 { margin-left: 44px; }
.reply { display: flex; align-items: center; gap: 10px; height: 118px; margin-top: auto; padding: 0 0 13px 44px; background: var(--grey); color: #333; font-size: 28px; letter-spacing: -.4px; }
.reply i { width: 60px; height: 60px; border-radius: 50%; background: #6b6b6b; }
.p-blank .bar { background: var(--mauve); }

/* weather */
.week { display: flex; flex-direction: column; gap: 40px; padding: 646px 0 0 45px; }
.day { flex: none; display: grid; grid-template-columns: 170px 4px 211px 133px 100px; align-items: center; width: 707px; height: 140px; padding-left: 39px; border: 2.4px solid var(--mauve); border-radius: 12px; color: var(--text); font-size: 28px; }
.day span { font-weight: 500; letter-spacing: .2px; }
.day i { width: 3px; height: 112px; background: var(--text); }
.day svg { width: 140px; height: 140px; margin: -2px 0 -2px 22px; }
.day b { font-weight: 600; letter-spacing: 1.3px; padding-left: 39px; padding-top: 2px; }
.day b:last-child { padding-top: 0; }
.day.last { margin: -24px 0 0 -2px; padding-top: 48px; padding-left: 41px; align-content: center; }
.head { position: relative; display: flex; align-items: center; justify-content: center; height: 42px; margin-top: 21px; font-size: 31px; color: var(--mauve); }
.head .back { position: absolute; left: 55px; top: 3px; }
.p-market .head { padding-left: 2px; }
.head.dim { margin-top: 26px; color: #777; font-size: 30px; font-weight: 500; }
.head.dim .back { left: 58px; }
.forecast { flex: none; width: 700px; height: 130px; margin: 27px 0 0 44px; border-radius: 10px 10px 0 0; background: #2f2f2f; color: #fff; overflow: hidden; }
.top { display: flex; justify-content: space-between; height: 70px; padding: 10px 34px 0 37px; }
.top b { font-size: 38px; font-weight: 900; line-height: 48px; letter-spacing: .3px; }
.top span { font-size: 29px; line-height: 60px; }
.temps { display: grid; grid-template-columns: repeat(5, 1fr); text-align: center; font-size: 29px; font-weight: 500; line-height: 76px; padding: 0 2px; }
.now { width: 112px; height: 80px; margin: 0 auto; border: 2.4px solid #c9c9c9; border-bottom: 0; border-radius: 30px 30px 0 0; background: #585858; line-height: 72px; }

/* market */
.hero { flex: none; width: 708px; height: 320px; margin: 34px 0 0 40px; padding-top: 43px; border-radius: 20px; background: var(--ink); color: var(--mauve); }
.p-market .hero { height: 320px; }
.hero svg { width: 192px; height: 192px; margin: 0 0 0 259px; }
.pager { display: flex; justify-content: center; gap: 10px; margin-top: 35px; }
.pager i { width: 18px; height: 18px; border-radius: 9px; background: #656363; }
.pager .on { width: 56px; background: #8f8989; }
.p-market .head { height: 38px; }
.p-market .head .back { top: 1px; }
.p-market .head + .hero { margin-top: 38px; }

/* hire */
.p-hire .head { margin-top: 25px; padding-left: 4px; font-weight: 500; color: var(--mauve); }
.p-hire .head .back { left: 59px; }
.cover-photo { flex: none; width: 708px; height: 328px; margin: 50px 0 0 44px; border-radius: 10px; background: var(--ink); }
.facts { display: grid; grid-template-columns: 603px 1fr; margin: 30px 0 0 45px; font-size: 22px; line-height: 30px; letter-spacing: .15px; color: #777; white-space: nowrap; }
.facts.strong { grid-template-columns: 621px 1fr; margin-top: 34px; font-size: 27px; font-weight: 500; color: #6f6f6f; }
.detail { display: flex; margin: 15px 0 0 47px; color: #777; }
.detail p { width: 606px; font-size: 20px; line-height: 24px; letter-spacing: -.75px; white-space: nowrap; }
.stepper { display: flex; align-items: center; gap: 12px; height: 26px; font-size: 20px; color: #6b6b6b; }
.stepper svg { width: 28px; height: 28px; fill: none; stroke: #6b6b6b; stroke-width: 2.6px; }
.stepper b { width: 12px; text-align: center; }
.loc { width: 701px; height: 98px; margin: 80px 0 0 39px; padding: 0 0 0 26px; gap: 18px; font-size: 24px; }
.loc svg { width: 36px; height: 41px; }
.num { width: 701px; height: 98px; margin: 29px 0 0 39px; padding: 0 30px 0 26px; justify-content: space-between; font-size: 24px; color: #6f6f6f; letter-spacing: -.1px; }
.num svg { width: 34px; height: 17px; }
.hire-btn { flex: none; width: 698px; height: 96px; margin: 29px 0 0 40px; border-radius: 10px; background: var(--grey); color: #6b6b6b; font-size: 31px; font-weight: 500; letter-spacing: .6px; line-height: 96px; text-align: center; }
```
